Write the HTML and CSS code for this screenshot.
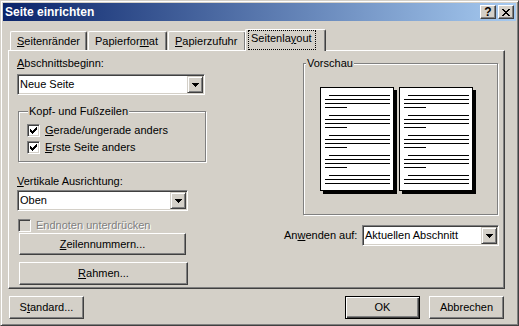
FILE: index.html
```html
<!DOCTYPE html>
<html lang="de">
<head>
    <meta charset="UTF-8">
    <meta name="viewport" content="width=device-width, initial-scale=1.0">
    <title>Seite einrichten</title>
    <link rel="stylesheet" href="styles.css">
</head>
<body>
    <div class="window">
        <div class="titlebar">
            <span class="title">Seite einrichten</span>
            <div class="caption-btns">
                <span class="cbtn help">?</span>
                <span class="cbtn">
                    <svg width="8" height="7" viewBox="0 0 8 7" shape-rendering="crispEdges">
                        <rect x="0" y="0" width="2" height="1"/><rect x="6" y="0" width="2" height="1"/>
                        <rect x="1" y="1" width="2" height="1"/><rect x="5" y="1" width="2" height="1"/>
                        <rect x="2" y="2" width="4" height="1"/>
                        <rect x="3" y="3" width="2" height="1"/>
                        <rect x="2" y="4" width="4" height="1"/>
                        <rect x="1" y="5" width="2" height="1"/><rect x="5" y="5" width="2" height="1"/>
                        <rect x="0" y="6" width="2" height="1"/><rect x="6" y="6" width="2" height="1"/>
                    </svg>
                </span>
            </div>
        </div>

        <div class="content">
            <div class="tabs">
                <div class="tab tab1"><u>S</u>eitenränder</div>
                <div class="tab tab2">Papierfor<u>m</u>at</div>
                <div class="tab tab3"><u>P</u>apierzufuhr</div>
                <div class="tab active"><span class="focus">Seitenla<u>y</u>out</span></div>
            </div>

            <div class="panel">
                <div class="col-left">
                    <div class="label"><u>A</u>bschnittsbeginn:</div>
                    <div class="combo combo-start">
                        <span class="combo-text">Neue Seite</span>
                        <span class="combo-btn"><svg width="7" height="4" viewBox="0 0 7 4" shape-rendering="crispEdges"><path d="M0 0h7v1h-1v1h-1v1h-1v1h-1v-1h-1v-1h-1v-1h-1z"/></svg></span>
                    </div>

                    <fieldset class="group group-kopf">
                        <legend>Kopf- und Fußzeilen</legend>
                        <div class="check-row">
                            <span class="checkbox"><svg width="7" height="7" viewBox="0 0 7 7" shape-rendering="crispEdges"><path d="M0 2h1v3h-1zM1 3h1v3h-1zM2 4h1v3h-1zM3 3h1v3h-1zM4 2h1v3h-1zM5 1h1v3h-1zM6 0h1v3h-1z"/></svg></span>
                            <span><u>G</u>erade/ungerade anders</span>
                        </div>
                        <div class="check-row">
                            <span class="checkbox"><svg width="7" height="7" viewBox="0 0 7 7" shape-rendering="crispEdges"><path d="M0 2h1v3h-1zM1 3h1v3h-1zM2 4h1v3h-1zM3 3h1v3h-1zM4 2h1v3h-1zM5 1h1v3h-1zM6 0h1v3h-1z"/></svg></span>
                            <span><u>E</u>rste Seite anders</span>
                        </div>
                    </fieldset>

                    <div class="label label-vert"><u>V</u>ertikale Ausrichtung:</div>
                    <div class="combo combo-vert">
                        <span class="combo-text">Oben</span>
                        <span class="combo-btn"><svg width="7" height="4" viewBox="0 0 7 4" shape-rendering="crispEdges"><path d="M0 0h7v1h-1v1h-1v1h-1v1h-1v-1h-1v-1h-1v-1h-1z"/></svg></span>
                    </div>

                    <div class="check-row disabled">
                        <span class="checkbox"></span>
                        <span>Endnoten unterdrücken</span>
                    </div>

                    <button class="btn btn-zeilen"><u>Z</u>eilennummern...</button>
                    <button class="btn btn-rahmen"><u>R</u>ahmen...</button>
                </div>

                <div class="col-right">
                    <fieldset class="group group-preview">
                        <legend>Vorschau</legend>
                        <div class="pages">
                            <div class="page">
                                <div class="ln indent"></div><div class="ln"></div><div class="ln"></div><div class="ln short"></div>
                                <div class="ln indent gap"></div><div class="ln"></div><div class="ln"></div><div class="ln short"></div>
                                <div class="ln indent gap"></div><div class="ln"></div><div class="ln"></div><div class="ln short"></div>
                                <div class="ln indent gap"></div><div class="ln"></div><div class="ln"></div><div class="ln short"></div>
                                <div class="ln indent gap"></div><div class="ln"></div><div class="ln"></div>
                            </div>
                            <div class="page">
                                <div class="ln indent"></div><div class="ln"></div><div class="ln"></div><div class="ln short"></div>
                                <div class="ln indent gap"></div><div class="ln"></div><div class="ln"></div><div class="ln short"></div>
                                <div class="ln indent gap"></div><div class="ln"></div><div class="ln"></div><div class="ln short"></div>
                                <div class="ln indent gap"></div><div class="ln"></div><div class="ln"></div><div class="ln short"></div>
                                <div class="ln indent gap"></div><div class="ln"></div><div class="ln"></div>
                            </div>
                        </div>
                    </fieldset>

                    <div class="apply-row">
                        <span class="apply-label">An<u>w</u>enden auf:</span>
                        <div class="combo combo-apply">
                            <span class="combo-text">Aktuellen Abschnitt</span>
                            <span class="combo-btn"><svg width="7" height="4" viewBox="0 0 7 4" shape-rendering="crispEdges"><path d="M0 0h7v1h-1v1h-1v1h-1v1h-1v-1h-1v-1h-1v-1h-1z"/></svg></span>
                        </div>
                    </div>
                </div>
            </div>

            <div class="footer">
                <button class="btn btn-std">S<u>t</u>andard...</button>
                <div class="footer-right">
                    <button class="btn btn-default">OK</button>
                    <button class="btn">Abbrechen</button>
                </div>
            </div>
        </div>
    </div>
</body>
</html>
```

FILE: styles.css
```css
body{
    margin: 0;
    font-family: "Liberation Sans", Arial, sans-serif;
    font-size: 11px;
    line-height: 13px;
    color: #000;
}
u{
    text-decoration-thickness: 1px;
    text-underline-offset: 1px;
}

/* window frame */
.window{
    width: 519px;
    height: 326px;
    box-sizing: border-box;
    background: #d4d0c8;
    border: 1px solid;
    border-color: #d4d0c8 #404040 #404040 #d4d0c8;
    box-shadow: inset 1px 1px #fff, inset -1px -1px #808080;
    padding: 2px;
}
.titlebar{
    height: 18px;
    display: flex;
    justify-content: space-between;
    background: linear-gradient(to right, #0a246a, #a6caf0);
}
.title{
    color: #fff;
    font-weight: bold;
    font-size: 12px;
    padding-left: 2px;
    line-height: 18px;
}
.caption-btns{
    display: flex;
    gap: 2px;
    padding: 2px 2px 0 0;
}
.cbtn{
    width: 16px;
    height: 14px;
    box-sizing: border-box;
    background: #d4d0c8;
    border: 1px solid;
    border-color: #fff #404040 #404040 #fff;
    box-shadow: inset -1px -1px #808080;
    display: flex;
    align-items: center;
    justify-content: center;
}
.cbtn.help{
    font-weight: bold;
    font-size: 12px;
    line-height: 12px;
}

.content{
    padding: 8px 0 0 5px;
}

/* tabs */
.tabs{
    display: flex;
    align-items: flex-end;
    height: 21px;
    padding-left: 2px;
}
.tab{
    height: 19px;
    box-sizing: border-box;
    border: 1px solid #fff;
    border-right-color: #404040;
    border-bottom: none;
    border-radius: 2px 2px 0 0;
    box-shadow: inset -1px 0 #808080;
    padding: 3px 0 0 6px;
    margin-right: 1px;
    background: #d4d0c8;
}
.tab1{ width: 77px; }
.tab2{ width: 79px; }
.tab3{ width: 78px; }
.tab.active{
    width: 81px;
    height: 22px;
    margin: 0 0 -1px -2px;
    padding: 1px 0 0 3px;
    position: relative;
    z-index: 1;
}
.focus{
    display: inline-block;
    outline: 1px dotted #000;
    padding: 1px 3px 4px 2px;
}

/* panel */
.panel{
    width: 497px;
    height: 239px;
    box-sizing: border-box;
    border: 1px solid;
    border-color: #fff #404040 #404040 #fff;
    box-shadow: inset -1px -1px #808080;
    padding: 6px 0 0 8px;
    display: flex;
}
.col-left{
    width: 190px;
    display: flex;
    flex-direction: column;
    align-items: flex-start;
}
.col-right{
    width: 215px;
    margin-left: 77px;
}
.label-vert{
    margin-top: 13px;
}

/* combo box */
.combo{
    height: 21px;
    box-sizing: border-box;
    border: 1px solid;
    border-color: #808080 #fff #fff #808080;
    box-shadow: inset 1px 1px #404040, inset -1px -1px #d4d0c8;
    background: #fff;
    padding: 1px 1px 1px 2px;
    display: flex;
    align-items: center;
    justify-content: space-between;
}
.combo-start{
    width: 188px;
    margin-top: 4px;
}
.combo-vert{
    width: 171px;
    margin-top: 2px;
}
.combo-apply{
    width: 137px;
}
.combo-btn{
    width: 16px;
    height: 17px;
    box-sizing: border-box;
    background: #d4d0c8;
    border: 1px solid;
    border-color: #d4d0c8 #404040 #404040 #d4d0c8;
    box-shadow: inset 1px 1px #fff, inset -1px -1px #808080;
    display: flex;
    align-items: center;
    justify-content: center;
}

/* group boxes */
.group{
    margin: 0;
    padding: 0;
    border: 1px solid #808080;
    box-shadow: inset 1px 1px #fff, 1px 1px #fff;
}
.group legend{
    padding: 0 1px;
    margin-left: 1px;
    background: #d4d0c8;
}
.group-kopf{
    width: 188px;
    box-sizing: border-box;
    margin: 10px 0 0 1px;
    padding: 6px 0 7px 8px;
}
.group-preview{
    width: 195px;
    height: 158px;
    box-sizing: border-box;
    margin-left: 19px;
}
.group-preview legend{
    margin-left: 2px;
}

/* checkboxes */
.check-row{
    display: flex;
    align-items: center;
    gap: 5px;
    height: 13px;
}
.check-row + .check-row{
    margin-top: 4px;
}
.checkbox{
    width: 13px;
    height: 13px;
    box-sizing: border-box;
    border: 1px solid;
    border-color: #808080 #fff #fff #808080;
    box-shadow: inset 1px 1px #404040, inset -1px -1px #d4d0c8;
    background: #fff;
    display: flex;
    align-items: center;
    justify-content: center;
}
.check-row.disabled{
    margin: 8px 0 0 1px;
    color: #808080;
    text-shadow: 1px 1px #fff;
}
.check-row.disabled .checkbox{
    background: #d4d0c8;
}

/* push buttons */
.btn{
    font: inherit;
    color: #000;
    height: 23px;
    width: 75px;
    padding: 0;
    box-sizing: border-box;
    background: #d4d0c8;
    border: 1px solid;
    border-color: #fff #404040 #404040 #fff;
    box-shadow: inset -1px -1px #808080;
}
.btn-zeilen{
    width: 167px;
    height: 22px;
    margin: 1px 0 0 2px;
}
.btn-rahmen{
    width: 169px;
    margin: 7px 0 0 2px;
}
.btn-default{
    border-color: #000;
    box-shadow: inset 1px 1px #fff, inset -1px -1px #404040, inset -2px -2px #808080;
}

/* preview pages */
.pages{
    display: flex;
    gap: 5px;
    padding: 17px 0 0 16px;
}
.page{
    width: 74px;
    height: 104px;
    box-sizing: border-box;
    background: #fff;
    border: 1px solid #000;
    box-shadow: 3px 3px 0 #000;
    padding: 4px 3px 0 4px;
}
.ln{
    height: 1px;
    background: #000;
    margin-top: 3px;
}
.ln.indent{
    margin-left: 4px;
}
.ln.short{
    width: 22px;
}
.ln.gap{
    margin-top: 7px;
}

.apply-row{
    display: flex;
    align-items: center;
    margin-top: 10px;
}
.apply-label{
    width: 78px;
}

/* footer */
.footer{
    width: 497px;
    display: flex;
    justify-content: space-between;
    margin-top: 7px;
    padding: 0 1px;
    box-sizing: border-box;
}
.footer-right{
    display: flex;
    gap: 9px;
}
```
